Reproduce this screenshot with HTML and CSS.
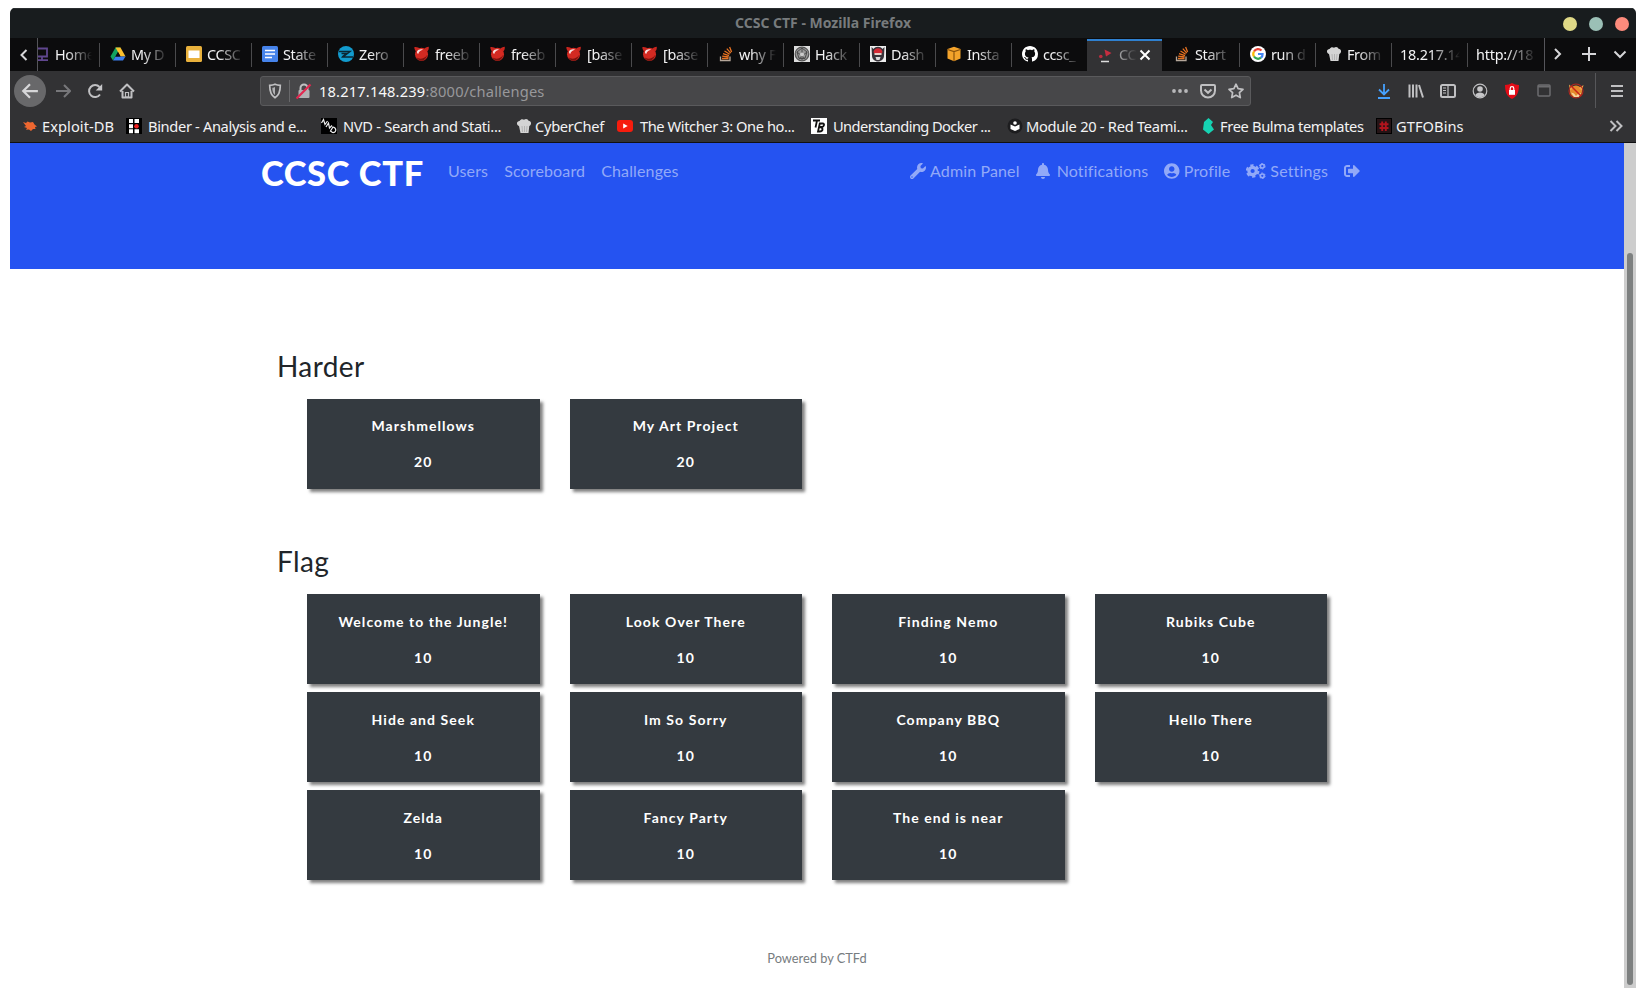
FILE: index.html
```html
<!DOCTYPE html>
<html lang="en">
<head>
<meta charset="utf-8">
<title>CCSC CTF</title>
<link rel="stylesheet" href="styles.css">
</head>
<body>
<svg class="defs" width="0" height="0">
  <defs>
    <symbol id="devil" viewBox="0 0 16 16"><circle cx="7.500" cy="8.300" r="6.500" fill="#d32a22"/><path d="M.3 1.200C2.500.8 4.800 1.500 5.800 3L2.500 6C1.200 4.800.3 3 .3 1.200zM14.800.8c-2 .2-4 1-4.800 2.400l3 2.600C14.300 4.800 15 3 14.800.8z" fill="#c9251e"/><path d="M3 5.500C4 3.500 7 2.800 9 3.800 7 4.200 5 5.500 4.200 8 3.200 7.500 2.800 6.500 3 5.500z" fill="#fff" opacity=".85"/><path d="M2.500 11.500c3 2 8 1.500 10.500-2.500-.5 3.500-3 5.500-5.500 5.500-2.300 0-4-1-5-3z" fill="#7e120e"/></symbol>
    <symbol id="stack" viewBox="0 0 16 16"><path d="M2.500 10.500v4h9.500v-4" fill="none" stroke="#b5a79a" stroke-width="1.300"/><path d="M4 12.500h6.500M4.200 10.200l6.400.8M5 7.600l6 2M6.500 5l5.200 3.300M8.800 2.600l4 4.500M11.600 1l2 5" stroke="#e87322" stroke-width="1.300" fill="none"/></symbol>
    <symbol id="chef" viewBox="0 0 16 16"><path d="M3 8C0 7 .500 3 3.500 3 5 .500 7 1 8 1.800 10 0 12 1.200 12.500 2.700c3 0 3.500 4 .8 5.300L12.500 15H4.500z" fill="#d4d4d4"/><path d="M6 8l.500 6M8.500 8v6M11 8l-.5 6" stroke="#aaa" fill="none" stroke-width=".8"/></symbol>
  </defs>
</svg>
<div class="window">
  <div class="titlebar">
    <span class="window-title">CCSC CTF - Mozilla Firefox</span>
    <span class="controls"><i class="dot yellow"></i><i class="dot teal"></i><i class="dot red"></i></span>
  </div>

  <div class="tabbar">
    <div class="scroll-left"><svg width="16" height="16" viewBox="0 0 16 16"><path d="M10.500 3L5.500 8l5 5" class="ln bright"/></svg></div>
    <div class="tabs">
      <div class="tab first"><svg class="fav" viewBox="0 0 12 16"><path d="M0 2.500h9v8H0M4 11v3M0 14.200h10" fill="none" stroke="#60478f" stroke-width="1.800"/></svg><span class="label">Home</span></div>
      <div class="tab"><svg class="fav" viewBox="0 0 16 16"><path d="M5.500 1.500h5L8 6 3 14.500.500 10.500z" fill="#12a15f"/><path d="M5.500 1.500h5l5 9h-5z" fill="#fbc02d"/><path d="M5.500 10.500h10L13 14.500H3z" fill="#3b7ded"/><path d="M8 6l2.500 4.500h-5z" fill="#0c0c0d"/></svg><span class="label">My D</span></div>
      <div class="tab"><svg class="fav" viewBox="0 0 16 16"><rect width="16" height="16" rx="1.500" fill="#e9b13c"/><rect x="2.500" y="4.500" width="11" height="7.500" fill="#fff"/></svg><span class="label">CCSC</span></div>
      <div class="tab"><svg class="fav" viewBox="0 0 16 16"><rect width="16" height="16" rx="1.500" fill="#4683ea"/><path d="M3 4.500h10M3 8h10M3 11.500h7" stroke="#fff" stroke-width="1.700"/></svg><span class="label">State</span></div>
      <div class="tab"><svg class="fav" viewBox="0 0 16 16"><circle cx="8" cy="8" r="8" fill="#129bce"/><path d="M1 5.500h11L5 11h10M3.500 7.500h5L4 11" fill="none" stroke="#0a2734" stroke-width="1.500"/></svg><span class="label">Zero</span></div>
      <div class="tab"><svg class="fav"><use href="#devil"/></svg><span class="label">freeb</span></div>
      <div class="tab"><svg class="fav"><use href="#devil"/></svg><span class="label">freeb</span></div>
      <div class="tab"><svg class="fav"><use href="#devil"/></svg><span class="label">[base</span></div>
      <div class="tab"><svg class="fav"><use href="#devil"/></svg><span class="label">[base</span></div>
      <div class="tab"><svg class="fav"><use href="#stack"/></svg><span class="label">why F</span></div>
      <div class="tab"><svg class="fav" viewBox="0 0 16 16"><rect width="16" height="16" fill="#ddd"/><circle cx="8" cy="8" r="6.800" fill="#999" stroke="#555" stroke-width="1.200"/><path d="M8 2l5 4-2 6.500H5L3 6zM3 6l8 6.500M13 6l-8 6.500M8 2v12" fill="none" stroke="#4b4b4b"/><circle cx="8" cy="8.500" r="2" fill="#ccc"/></svg><span class="label">Hack</span></div>
      <div class="tab"><svg class="fav" viewBox="0 0 16 16"><rect width="16" height="16" fill="#eee"/><path d="M1.500 1l2 2c2-3 7-3 9 0l2-2-.5 9c0 3-3 5.500-6 5.500S2 13 2 10z" fill="#38343a"/><path d="M3.500 6c1-5 8-5 9 0l-1 1.500h-7z" fill="#d42a35"/><path d="M4.500 7h7v2h-7z" fill="#e8d0c8"/><path d="M5.500 11h5l-1 3h-3z" fill="#ddd"/></svg><span class="label">Dash</span></div>
      <div class="tab"><svg class="fav" viewBox="0 0 16 16"><path d="M8 .8l6.500 2.200v9.500L8 15.200l-6.500-2.700V3z" fill="#f4a32b"/><path d="M1.500 3.500L8 5.500l6.500-2M8 5.500V15" stroke="#8b520b" stroke-width="1.200" fill="none"/></svg><span class="label">Insta</span></div>
      <div class="tab"><svg class="fav" viewBox="0 0 16 16"><path fill="#fff" d="M8 0C3.580 0 0 3.580 0 8c0 3.540 2.290 6.530 5.470 7.590.4.070.55-.17.55-.38 0-.19-.01-.82-.01-1.490-2.010.37-2.530-.49-2.690-.94-.09-.23-.48-.94-.82-1.130-.28-.15-.68-.52-.01-.53.63-.01 1.080.58 1.230.82.72 1.210 1.870.87 2.330.66.070-.52.28-.87.51-1.070-1.780-.2-3.640-.89-3.640-3.950 0-.87.31-1.590.82-2.150-.08-.2-.36-1.020.08-2.120 0 0 .67-.21 2.200.82.64-.18 1.320-.27 2-.27s1.360.09 2 .27c1.530-1.040 2.200-.82 2.200-.82.44 1.100.16 1.920.08 2.120.51.560.82 1.270.82 2.150 0 3.070-1.870 3.750-3.650 3.950.29.25.54.73.54 1.480 0 1.070-.01 1.930-.01 2.200 0 .21.15.46.55.38A8.010 8.010 0 0 0 16 8c0-4.420-3.580-8-8-8z"/></svg><span class="label">ccsc_</span></div>
      <div class="tab active"><svg class="fav" viewBox="0 0 16 16"><path d="M6.500 2.500l7 3.500-5.500 3.500z" fill="#c52e40"/><circle cx="2.800" cy="9.500" r="1.800" fill="#b92d3f"/><path d="M3 14.500h8" stroke="#ddd" stroke-width="1.400"/></svg><span class="label short">CC</span><svg class="close" viewBox="0 0 16 16"><path d="M3.500 3.500l9 9M12.500 3.500l-9 9" stroke="#fff" stroke-width="2"/></svg></div>
      <div class="tab after"><svg class="fav"><use href="#stack"/></svg><span class="label">Start</span></div>
      <div class="tab"><svg class="fav" viewBox="0 0 16 16"><circle cx="8" cy="8" r="8" fill="#fff"/><g fill="none" stroke-width="2.200"><path d="M4 5.500a4.700 4.700 0 0 1 7.500-1" stroke="#e94235"/><path d="M4 5.500a4.700 4.700 0 0 0 0 5" stroke="#fabb05"/><path d="M4 10.500a4.700 4.700 0 0 0 7 1.200" stroke="#34a853"/><path d="M8 8h4.600a4.500 4.500 0 0 1-1.600 3.700" stroke="#4285f4"/></g></svg><span class="label">run d</span></div>
      <div class="tab"><svg class="fav"><use href="#chef"/></svg><span class="label">From</span></div>
      <div class="tab plain"><span class="label">18.217.14</span></div>
      <div class="tab plain"><span class="label">http://18</span></div>
    </div>
    <div class="tab-tools">
      <svg width="16" height="16" viewBox="0 0 16 16"><path d="M6 3l5 5-5 5" class="ln bright"/></svg>
      <svg width="16" height="16" viewBox="0 0 16 16"><path d="M8 1v14M1 8h14" class="ln bright"/></svg>
      <svg width="16" height="16" viewBox="0 0 16 16"><path d="M2.500 5.500L8 11l5.500-5.500" class="ln bright"/></svg>
    </div>
  </div>

  <div class="toolbar">
    <div class="nav-buttons">
      <span class="back"><svg width="18" height="18" viewBox="0 0 16 16"><path d="M15 8H2M8 2L2 8l6 6" class="ln bright"/></svg></span>
      <svg width="16" height="16" viewBox="0 0 16 16"><path d="M1 8h13M9 2l6 6-6 6" class="ln dim"/></svg>
      <svg width="16" height="16" viewBox="0 0 16 16"><path d="M13 11.500A6 6 0 1 1 12.500 4" class="ln"/><path d="M15.200 1v6.500H8.700z" fill="#c6c6c8"/></svg>
      <svg width="16" height="16" viewBox="0 0 16 16"><path d="M1 8.500L8 1.500l7 7M3.500 8v6.500h9V8" class="ln" stroke-linejoin="round"/><path d="M6.500 14v-4.500h3V14z" class="ln thin"/></svg>
    </div>
    <div class="urlbar">
      <svg width="16" height="16" viewBox="0 0 16 16"><path d="M8 1.300c2 .9 3.800 1 5.300 1C13.300 8.500 12 12.500 8 14.700 4 12.500 2.700 8.500 2.700 2.300c1.500 0 3.300-.1 5.300-1z" class="ln med"/><path d="M8 4v8C6 10.500 5.300 8 5.300 4.700 6.500 4.700 7.200 4.400 8 4z" fill="#b1b1b3"/></svg>
      <i class="url-sep"></i>
      <svg width="16" height="16" viewBox="0 0 16 16"><path d="M4.500 7V5a3.500 3.500 0 0 1 7 0v2" class="ln"/><rect x="2.500" y="7" width="11" height="8" rx="1" fill="#b1b1b3"/><path d="M.500 15.500l14-14" stroke="#e22850" stroke-width="2.200"/></svg>
      <span class="url">18.217.148.239<span class="path">:8000/challenges</span></span>
      <span class="url-actions">
        <svg width="16" height="16" viewBox="0 0 16 16" fill="#b8b8ba"><circle cx="2" cy="8" r="1.900"/><circle cx="8" cy="8" r="1.900"/><circle cx="14" cy="8" r="1.900"/></svg>
        <svg width="16" height="16" viewBox="0 0 16 16"><path d="M2 2h12a1 1 0 0 1 1 1v4.500a7 7 0 0 1-14 0V3a1 1 0 0 1 1-1z" class="ln"/><path d="M4.500 6.500L8 9.800l3.500-3.300" class="ln"/></svg>
        <svg width="16" height="16" viewBox="0 0 16 16"><path d="M8 1.200l2.100 4.500 4.900.6-3.600 3.400.9 4.900L8 12.200l-4.300 2.400.9-4.900L1 6.300l4.900-.6z" class="ln med" stroke-linejoin="round"/></svg>
      </span>
    </div>
    <div class="tool-icons">
      <svg width="16" height="16" viewBox="0 0 16 16"><path d="M8 1v10M3 6.500l5 5 5-5M2 15h12" fill="none" stroke="#45a1ff" stroke-width="1.800"/></svg>
      <svg width="16" height="16" viewBox="0 0 16 16"><path d="M1.500 1.500v13M5 1.500v13M8.500 1.500v13M11 2l4 12.500" class="ln"/></svg>
      <svg width="16" height="16" viewBox="0 0 16 16"><rect x="1" y="2" width="14" height="12" rx="1.500" class="ln"/><path d="M8 2v12M3 5h3M3 7.500h3M3 10h3" class="ln thin"/></svg>
      <svg width="16" height="16" viewBox="0 0 16 16"><circle cx="8" cy="8" r="6.800" class="ln thin"/><circle cx="8" cy="6" r="2.800" fill="#c6c6c8"/><path d="M3.300 12c1.200-3.500 8.200-3.500 9.400 0-2 3-7.400 3-9.400 0z" fill="#c6c6c8"/></svg>
      <svg width="16" height="16" viewBox="0 0 16 16"><path d="M8 0c2 1.400 4.500 1.800 7 1.900C15 9 13 13.500 8 16 3 13.500 1 9 1 1.900 3.500 1.800 6 1.400 8 0z" fill="#e30c17"/><rect x="5" y="7" width="6" height="4.800" fill="#fff"/><path d="M6.200 7V5.500a1.800 1.800 0 0 1 3.600 0V7" fill="none" stroke="#fff" stroke-width="1.200"/></svg>
      <svg width="16" height="16" viewBox="0 0 16 16"><rect x="2" y="2" width="12" height="11" rx="1" fill="none" stroke="#6c6c6f" stroke-width="1.500"/><path d="M2 3.500h12" stroke="#6c6c6f" stroke-width="2"/></svg>
      <svg width="16" height="16" viewBox="0 0 16 16"><circle cx="8" cy="8.500" r="6" fill="#e58a2c"/><path d="M1 1.500l4 3.500-3 3zM15.500 2l-4.500 3 3 3z" fill="#f0a548"/><path d="M3 9.500l3 1 2 2.500 2-2 3-1-2 4H6z" fill="#f4d7a0"/><circle cx="8" cy="8" r="7" fill="none" stroke="#b3261d" stroke-width="1.100"/><path d="M3.300 3.300l9.500 9.500" stroke="#c72218" stroke-width="1.500"/></svg>
    </div>
    <div class="menu"><svg width="14" height="16" viewBox="0 0 14 16"><path d="M1 3h12M1 8h12M1 13h12" class="ln"/></svg></div>
  </div>

  <div class="bookmarks">
    <div class="bm b1"><svg class="fav" viewBox="0 0 16 16"><path d="M1 4l3 1 1.500-1.500L8 4.500l3-.5 1.500 2.500 2.500 2-2 .5.500 2-2.500 0L9 13l-2-1.500-3 .200L5 10 2 9l2-1z" fill="#ee6730"/></svg><span>Exploit-DB</span></div>
    <div class="bm b2"><svg class="fav" viewBox="0 0 16 16"><rect width="16" height="16"/><path d="M3 1h4v4H3zM8.500 1H13v4H8.500zM3 6.200h4v4H3zM3 11.300h4v4H3zM8.500 11.300H13v4H8.500z" fill="#fff"/><circle cx="10.500" cy="8.200" r="2.300" fill="#e22"/></svg><span>Binder - Analysis and e...</span></div>
    <div class="bm b3"><svg class="fav" viewBox="0 0 16 16"><rect width="16" height="16"/><path d="M.5 5l2-3.500 1.500 5 2.500-3.500M5 9l2.500-4 1 5 2.500-2.500M9.500 13l2.500-4c4 1 3.500 6-.5 5.500z" fill="none" stroke="#eee" stroke-width="1.200"/></svg><span>NVD - Search and Stati...</span></div>
    <div class="bm b4"><svg class="fav"><use href="#chef"/></svg><span>CyberChef</span></div>
    <div class="bm b5"><svg class="fav" viewBox="0 0 16 16"><rect y="2" width="16" height="12" rx="3" fill="#f61c0d"/><path d="M6.200 5.500l4.500 2.500-4.500 2.500z" fill="#fff"/></svg><span>The Witcher 3: One ho...</span></div>
    <div class="bm b6"><svg class="fav" viewBox="0 0 16 16"><rect width="16" height="16" fill="#fff"/><path d="M2 2.500h7M6 2.500L4.500 9.500M8.800 5.500h3c2 0 1.500 3.300-.8 3.500H8.500c4 0 4 4.500 0 4.500H7z" fill="none" stroke="#111" stroke-width="1.800"/></svg><span>Understanding Docker ...</span></div>
    <div class="bm b7"><svg class="fav" viewBox="0 0 16 16"><circle cx="8" cy="8" r="7.500" fill="#1d1d1f"/><circle cx="8" cy="5" r="1.800" fill="#fff"/><path d="M3.500 6.500L8 8.500l4.500-2V11L8 13l-4.500-2z" fill="#fff"/></svg><span>Module 20 - Red Teami...</span></div>
    <div class="bm b8"><svg class="fav" viewBox="0 0 16 16"><path d="M7.500 0l4.500 4-2 3 3 4.500L7.500 16 2 11.500 3 4z" fill="#16d2b2"/></svg><span>Free Bulma templates</span></div>
    <div class="bm b9"><svg class="fav" viewBox="0 0 16 16"><rect x=".5" y=".5" width="15" height="15" fill="#241416" stroke="#000"/><path d="M6.200 3.500v9.500M9.800 3.500v9.500M3.500 6.300h9M3.500 10h9" stroke="#b0141d" stroke-width="1.900"/></svg><span>GTFOBins</span></div>
    <svg class="more" width="16" height="16" viewBox="0 0 16 16"><path d="M2.500 3l5 5-5 5M8.500 3l5 5-5 5" class="ln"/></svg>
  </div>

  <div class="viewport">
    <div class="page">
      <header class="hero">
        <nav class="container navbar">
          <a class="brand">CCSC CTF</a>
          <a>Users</a><a>Scoreboard</a><a>Challenges</a>
          <div class="nav-right">
            <a><svg width="16" height="16" viewBox="0 0 512 512"><path d="M507.700 109.100c-2.200-9-13.500-12.100-20.100-5.500l-74.400 74.400-67.900-11.300-11.300-67.900 74.400-74.400c6.600-6.600 3.400-17.900-5.700-20.200-47.400-11.700-99.600.9-136.600 37.900-39.600 39.600-50.500 97.100-34.100 147.200L18.700 402.800c-25 25-25 65.500 0 90.500s65.500 25 90.500 0l213.200-213.200c50.100 16.700 107.500 5.700 147.400-34.200 37.100-37.100 49.700-89.300 37.900-136.800zM64 472c-13.200 0-24-10.800-24-24s10.700-24 24-24 24 10.700 24 24-10.700 24-24 24z"/></svg><span>Admin Panel</span></a>
            <a class="notif"><svg width="14" height="16" viewBox="0 0 448 512"><path d="M224 512c35.300 0 63.900-28.600 63.900-64H160.100c0 35.400 28.600 64 63.900 64zm215.400-149.700c-19.300-20.800-55.500-52-55.500-154.300 0-77.700-54.500-139.900-127.900-155.200V32c0-17.700-14.300-32-32-32s-32 14.300-32 32v20.800C118.600 68.100 64.100 130.300 64.100 208c0 102.300-36.200 133.500-55.500 154.300-6 6.400-8.700 14.100-8.600 21.700.1 16.400 13 32 32.100 32h383.800c19.100 0 32-15.600 32.100-32 .1-7.600-2.600-15.300-8.600-21.700z"/></svg><span>Notifications</span></a>
            <a><svg width="15.500" height="16" viewBox="0 0 496 512"><path d="M248 8C111 8 0 119 0 256s111 248 248 248 248-111 248-248S385 8 248 8zm0 96c48.600 0 88 39.400 88 88s-39.400 88-88 88-88-39.400-88-88 39.400-88 88-88zm0 344c-58.700 0-111.300-26.600-146.500-68.200 18.800-35.400 55.600-59.800 98.500-59.800 2.400 0 4.800.4 7.100 1.100 13 4.200 26.600 6.900 40.900 6.900s28-2.700 40.900-6.900c2.300-.7 4.700-1.100 7.100-1.100 42.900 0 79.700 24.400 98.500 59.800C359.300 421.400 306.700 448 248 448z"/></svg><span>Profile</span></a>
            <a><svg width="20" height="16" viewBox="0 0 20 16"><g fill="none" stroke="currentColor"><circle cx="6.600" cy="8" r="3.700" stroke-width="3.200"/><circle cx="6.600" cy="8" r="5.800" stroke-width="2" stroke-dasharray="3.300 2.774"/><circle cx="16.300" cy="3.200" r="1.900" stroke-width="1.500"/><circle cx="16.300" cy="3.200" r="2.800" stroke-width="1" stroke-dasharray="1.700 1.232"/><circle cx="16.300" cy="12.800" r="1.900" stroke-width="1.500"/><circle cx="16.300" cy="12.800" r="2.800" stroke-width="1" stroke-dasharray="1.700 1.232"/></g></svg><span>Settings</span></a>
            <a><svg width="16" height="16" viewBox="0 0 512 512"><path d="M497 273L329 441c-15 15-41 4.500-41-17v-96H152c-13.300 0-24-10.700-24-24v-96c0-13.300 10.700-24 24-24h136V88c0-21.400 25.900-32 41-17l168 168c9.300 9.400 9.300 24.600 0 34zM192 436v-40c0-6.600-5.400-12-12-12H96c-17.700 0-32-14.300-32-32V160c0-17.700 14.300-32 32-32h84c6.600 0 12-5.400 12-12V76c0-6.600-5.400-12-12-12H96c-53 0-96 43-96 96v192c0 53 43 96 96 96h84c6.600 0 12-5.400 12-12z"/></svg></a>
          </div>
        </nav>
      </header>
      <main class="container board">
        <section class="category">
          <h3>Harder</h3>
          <div class="grid">
            <button class="card"><p>Marshmellows</p><span>20</span></button>
            <button class="card"><p>My Art Project</p><span>20</span></button>
          </div>
        </section>
        <section class="category flags">
          <h3>Flag</h3>
          <div class="grid">
            <button class="card"><p>Welcome to the Jungle!</p><span>10</span></button>
            <button class="card"><p>Look Over There</p><span>10</span></button>
            <button class="card"><p>Finding Nemo</p><span>10</span></button>
            <button class="card"><p>Rubiks Cube</p><span>10</span></button>
            <button class="card"><p>Hide and Seek</p><span>10</span></button>
            <button class="card"><p>Im So Sorry</p><span>10</span></button>
            <button class="card"><p>Company BBQ</p><span>10</span></button>
            <button class="card"><p>Hello There</p><span>10</span></button>
            <button class="card"><p>Zelda</p><span>10</span></button>
            <button class="card"><p>Fancy Party</p><span>10</span></button>
            <button class="card"><p>The end is near</p><span>10</span></button>
          </div>
        </section>
      </main>
      <footer>Powered by CTFd</footer>
    </div>
    <div class="scrollbar"><div class="thumb"></div></div>
  </div>
</div>
</body>
</html>
```
FILE: styles.css
```css
* { box-sizing: border-box; }
body { margin: 0; padding: 8px 10px 10px; background: #fff; height: 998px; overflow: hidden; }
svg { display: block; flex: none; }
.defs { position: absolute; }
.window { width: 1626px; height: 980px; display: flex; flex-direction: column; font-family: "Noto Sans", sans-serif; font-size: 14.67px; color: #f3f3f4; border-radius: 5px 5px 0 0; overflow: hidden; }
.ln { fill: none; stroke: #c0c0c2; stroke-width: 2; }
.ln.bright { stroke: #d6d6d8; }
.ln.dim { stroke: #77777a; }
.ln.thin { stroke-width: 1.2; }
.ln.med { stroke-width: 1.7; }
.fav { width: 16px; height: 16px; flex: none; }

.titlebar { height: 30px; background: #181c1e; display: grid; grid-template-columns: 1fr auto 1fr; align-items: center; border-top: 1px solid #2a2e30; padding-bottom: 2px; }
.window-title { grid-column: 2; font-size: 14px; font-weight: 700; color: #777b7d; }
.controls { display: flex; gap: 12px; justify-content: flex-end; padding: 2px 7px 0 0; }
.dot { width: 14px; height: 14px; border-radius: 50%; }
.yellow { background: #dfd987; }
.teal { background: #9bc0b6; }
.red { background: #fc8b7c; }

.tabbar { height: 33px; background: #0c0c0d; display: flex; }
.scroll-left { width: 27px; display: flex; align-items: center; padding-left: 6px; }
.tabs { width: 1508px; display: flex; overflow: hidden; border-left: 1px solid #55555a; border-right: 1px solid #55555a; }
.tab { width: 76px; flex: none; display: flex; align-items: center; padding: 0 0 1px 11px; position: relative; }
.tab::before { content: ""; position: absolute; left: 0; top: 5px; height: 24px; width: 1px; background: #4a4a4c; }
.tab.first { width: 61px; padding-left: 0; }
.tab.first .fav { width: 12px; }
.tab.first::before, .tab.active::before, .tab.after::before { display: none; }
.label { margin-left: 5px; width: 37px; font-size: 14.4px; letter-spacing: -.35px; overflow: hidden; white-space: nowrap; -webkit-mask-image: linear-gradient(90deg, #000 30%, #0002 92%, transparent); mask-image: linear-gradient(90deg, #000 30%, #0002 92%, transparent); }
.plain { padding-left: 9px; }
.plain .label { margin-left: 0; width: 60px; letter-spacing: -.2px; -webkit-mask-image: linear-gradient(90deg, #000 50%, #0002 95%, transparent); mask-image: linear-gradient(90deg, #000 50%, #0002 95%, transparent); }
.tab.active { background: #323234; border-top: 2px solid #2f80cf; margin-top: 1px; width: 75px; margin-right: 1px; padding-bottom: 3px; }
.label.short { width: 18px; margin-right: -3px; -webkit-mask-image: linear-gradient(90deg, #0009, transparent); mask-image: linear-gradient(90deg, #0009, transparent); }
.close { width: 16px; height: 16px; margin-left: 3px; }
.tab-tools { flex: 1; display: flex; align-items: center; justify-content: space-between; padding: 0 8px 2px 4px; }

.toolbar { height: 39px; background: #323234; display: flex; align-items: center; }
.nav-buttons { width: 250px; padding-left: 4px; display: flex; align-items: center; gap: 16px; }
.back { width: 32px; height: 32px; border-radius: 50%; background: #68686a; display: grid; place-items: center; margin-right: -7px; }
.urlbar { width: 991px; height: 30px; background: #474749; border: 1px solid #5a5a5c; border-radius: 3px; display: flex; align-items: center; padding: 0 6px; }
.url-sep { width: 1px; height: 22px; background: #68686a; margin: 0 6px; }
.url { margin-left: 7px; color: #f9f9fa; letter-spacing: .17px; }
.path { color: #98989b; }
.url-actions { margin-left: auto; display: flex; gap: 12px; }
.tool-icons { margin-left: 115px; width: 219px; display: flex; gap: 16px; padding-left: 10px; }
.menu { margin-left: auto; height: 35px; border-left: 1px solid #57575a; width: 41px; display: grid; place-items: center; padding-left: 2px; }

.bookmarks { height: 33px; background: #323234; border-bottom: 1px solid #101012; display: flex; align-items: center; padding-left: 12px; }
.bm { display: flex; align-items: center; gap: 5px; white-space: nowrap; letter-spacing: -.35px; }
.b1 { width: 104px; gap: 4px; letter-spacing: .05px; }
.b2 { width: 195px; gap: 6px; }
.b3 { width: 195px; gap: 6px; letter-spacing: -.3px; }
.b4 { width: 101px; gap: 3px; letter-spacing: -.3px; }
.b5 { width: 194px; gap: 7px; letter-spacing: -.42px; }
.b6 { width: 196px; gap: 6px; letter-spacing: -.6px; }
.b7 { width: 194px; gap: 3px; letter-spacing: -.28px; }
.b8 { width: 175px; gap: 3px; }
.b9 { width: 90px; gap: 4px; letter-spacing: .05px; }
.more { margin-left: auto; margin-right: 12px; }

.viewport { flex: 1; display: flex; min-height: 0; font-family: Lato, sans-serif; }
.page { flex: 1; display: flex; flex-direction: column; background: #fff; color: #212529; font-size: 16px; }
.scrollbar { width: 12px; background: #cdcdcd; padding: 110px 3px 3px; display: flex; }
.thumb { flex: 1; background: #7d8080; border-radius: 3px; }
.container { width: 1140px; margin: 0 auto; }
.hero { height: 126px; background: #2553f1; }
.navbar { display: flex; align-items: center; height: 56px; padding: 0 15px; color: #92a9f8; letter-spacing: .14px; }
.navbar a { display: flex; align-items: center; gap: 4px; margin-right: 16px; line-height: 24px; }
.navbar svg { fill: currentColor; }
.navbar .brand { color: #fff; font-size: 34.5px; font-weight: 900; letter-spacing: .6px; text-indent: -1px; width: 170px; white-space: nowrap; line-height: 40px; padding-top: 3px; }
.nav-right { margin-left: auto; display: flex; }
.navbar .notif { gap: 7px; }
.nav-right a:last-child { margin-right: 12px; }
.board { padding: 80px 30px 0; }
.category { margin-bottom: 55px; }
h3 { margin: 0; font-size: 28px; line-height: 34px; font-weight: 400; padding-bottom: 16px; letter-spacing: .4px; }
.grid { display: grid; grid-template-columns: repeat(4, 232.5px); gap: 8px 30px; padding-left: 30px; }
.card { height: 90px; border: 0; background: #343a40; box-shadow: 3px 3px 3px rgba(0, 0, 0, .5); color: #fff; font: 700 14px/20px Lato, sans-serif; letter-spacing: 1.07px; padding: 0; }
.flags .card { padding-top: 2px; }
.card p { margin: 0 0 16px; }
footer { margin: auto 0 21px; text-align: center; font-size: 12.8px; line-height: 18px; color: #777c80; }
```
